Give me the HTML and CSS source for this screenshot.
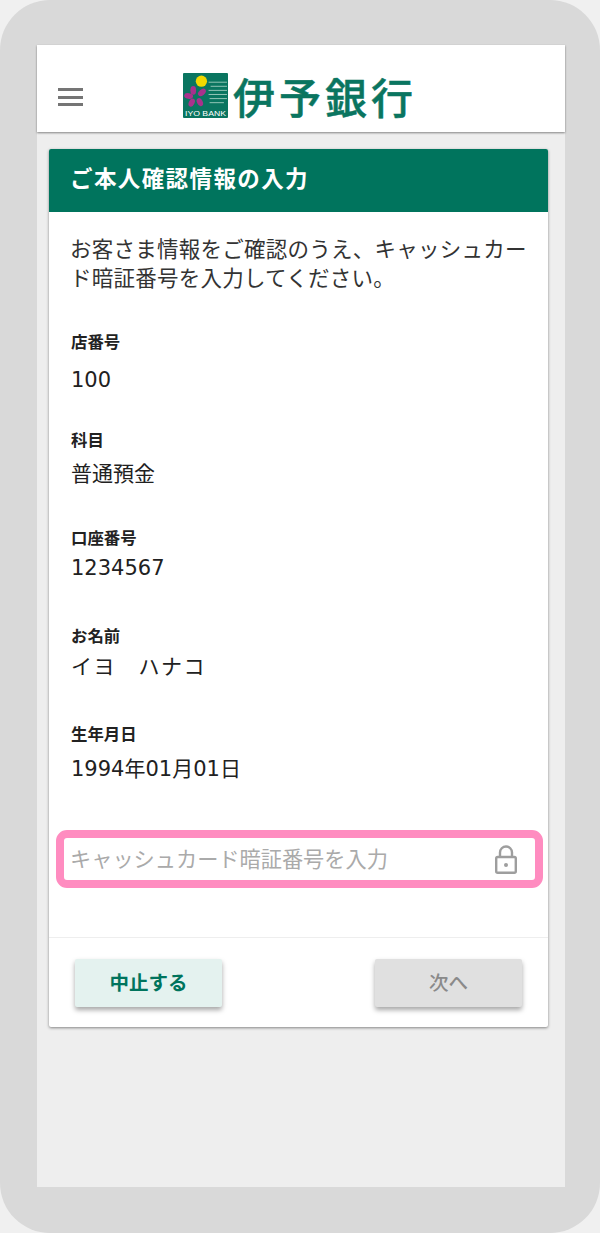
FILE: index.html
```html
<!DOCTYPE html>
<html lang="ja">
<head>
  <meta charset="UTF-8">
  <title>ご本人確認情報の入力</title>
  <link rel="stylesheet" href="styles.css">
</head>
<body>
  <div class="phone">
    <div class="screen">
      <header class="topbar">
        <button class="menu" aria-label="メニュー"><span></span><span></span><span></span></button>
        <div class="logo">
          <svg class="mark" viewBox="0 0 44 44" width="45" height="45">
            <rect width="44" height="44" rx="1" fill="#0a7560"/>
            <g stroke="#8fc3b4" stroke-width="1">
              <line x1="25" y1="9" x2="43" y2="9"/>
              <line x1="27" y1="13" x2="43" y2="13"/>
              <line x1="25" y1="17" x2="43" y2="17"/>
              <line x1="25" y1="21" x2="43" y2="21"/>
              <line x1="26" y1="25" x2="43" y2="25"/>
              <line x1="26" y1="29" x2="40" y2="29"/>
            </g>
            <circle cx="18" cy="8" r="5.5" fill="#f2d800"/>
            <g fill="#a8328c">
              <ellipse cx="10" cy="17" rx="2.8" ry="4.2"/>
              <ellipse cx="18.5" cy="19" rx="2.8" ry="4.4" transform="rotate(50 18.5 19)"/>
              <ellipse cx="5.5" cy="22.5" rx="4.4" ry="2.8" transform="rotate(10 5.5 22.5)"/>
              <ellipse cx="8.5" cy="29" rx="2.8" ry="4.2" transform="rotate(25 8.5 29)"/>
              <ellipse cx="16.5" cy="28.5" rx="2.8" ry="4.2" transform="rotate(-25 16.5 28.5)"/>
            </g>
            <text x="2" y="42" class="mark-text" textLength="40" lengthAdjust="spacingAndGlyphs">IYO BANK</text>
          </svg>
          <span class="logo-name">伊予銀行</span>
        </div>
      </header>

      <main class="card">
        <h1 class="card-title">ご本人確認情報の入力</h1>
        <div class="card-body">
          <p class="intro">お客さま情報をご確認のうえ、キャッシュカード暗証番号を入力してください。</p>

          <div class="field field-branch">
            <div class="label">店番号</div>
            <div class="value">100</div>
          </div>
          <div class="field field-type">
            <div class="label">科目</div>
            <div class="value">普通預金</div>
          </div>
          <div class="field field-account">
            <div class="label">口座番号</div>
            <div class="value">1234567</div>
          </div>
          <div class="field field-name">
            <div class="label">お名前</div>
            <div class="value">イヨ　ハナコ</div>
          </div>
          <div class="field field-birth">
            <div class="label">生年月日</div>
            <div class="value">1994年01月01日</div>
          </div>

          <div class="pin-box">
            <input class="pin-input" type="password" placeholder="キャッシュカード暗証番号を入力">
            <svg class="lock" viewBox="0 0 22 29" width="22" height="29">
              <path d="M5 12V7.5a6 6 0 0 1 12 0V12" fill="none" stroke="#9e9e9e" stroke-width="2.4"/>
              <rect x="1.2" y="12" width="19.6" height="15.8" rx="1.5" fill="none" stroke="#9e9e9e" stroke-width="2.4"/>
              <circle cx="11" cy="20" r="2" fill="#9e9e9e"/>
            </svg>
          </div>
        </div>
        <footer class="card-actions">
          <button class="btn btn-cancel">中止する</button>
          <button class="btn btn-next" disabled>次へ</button>
        </footer>
      </main>
    </div>
  </div>
</body>
</html>
```

FILE: styles.css
```css
* { box-sizing: border-box; }
body {
  margin: 0;
  background: #f0f0f0;
  font-family: "DejaVu Sans", "Noto Sans CJK JP", sans-serif;
  color: #212121;
}
.phone {
  width: 600px;
  height: 1233px;
  padding: 45px 35px 46px 37px;
  background: #d9d9d9;
  border-radius: 50px;
}
.screen {
  height: 100%;
  background: #eeeeee;
  display: flex;
  flex-direction: column;
  gap: 17px;
}
.topbar {
  height: 87px;
  background: #fff;
  box-shadow: 0 1px 2px rgba(0, 0, 0, 0.45);
  display: flex;
  align-items: flex-end;
}
.menu {
  width: 25px;
  height: 18px;
  margin: 0 0 26px 21px;
  padding: 0;
  border: none;
  background: none;
  display: flex;
  flex-direction: column;
  justify-content: space-between;
}
.menu span {
  display: block;
  height: 3px;
  background: #757575;
}
.logo {
  display: flex;
  align-items: center;
  gap: 5px;
  margin: 0 0 14px 100px;
}
.mark { display: block; }
.mark-text {
  font-family: "Liberation Sans", sans-serif;
  font-size: 7px;
  fill: #fff;
}
.logo-name {
  font-family: "Noto Sans CJK JP", sans-serif;
  font-size: 42px;
  font-weight: 500;
  letter-spacing: 4px;
  line-height: 44px;
  color: #0a7560;
  -webkit-text-stroke: 0.5px #0a7560;
  white-space: nowrap;
}
.card {
  margin: 0 17px 0 12px;
  height: 878px;
  background: #fff;
  border-radius: 2px;
  box-shadow: 0 1px 3px rgba(0, 0, 0, 0.45);
  display: flex;
  flex-direction: column;
}
.card-title {
  margin: 0;
  height: 63px;
  padding-left: 21px;
  background: #00745d;
  border-radius: 2px 2px 0 0;
  color: #fff;
  font-family: "Noto Sans CJK JP", sans-serif;
  font-size: 22.5px;
  font-weight: 700;
  letter-spacing: 1.4px;
  line-height: 57px;
}
.card-body {
  flex: 1;
  padding: 21px 5px 0 22px;
}
.intro {
  width: 465px;
  margin: 0 0 38px -1px;
  font-family: "Noto Sans CJK JP", sans-serif;
  font-size: 21.5px;
  letter-spacing: 0.25px;
  line-height: 29px;
  color: #333;
}
.label {
  font-family: "Noto Sans CJK JP", sans-serif;
  font-size: 16.4px;
  font-weight: 700;
  line-height: 24px;
  color: #222;
}
.value {
  font-size: 21px;
  line-height: 28px;
  color: #212121;
}
.field-branch { height: 98px; }
.field-branch .label { margin-bottom: 13px; }
.field-type { height: 98px; }
.field-type .label { margin-bottom: 9px; }
.field-account { height: 98px; }
.field-account .label { margin-bottom: 5px; }
.field-name { height: 98px; }
.field-name .label { margin-bottom: 6px; }
.field-name .value { letter-spacing: 1.5px; }
.field-birth { height: 109px; }
.field-birth .label { margin-bottom: 10px; }
.pin-box {
  width: 487px;
  height: 58px;
  margin-left: -15px;
  border: 8px solid #ff8cc0;
  border-radius: 11px;
  display: flex;
  align-items: center;
  padding-right: 18px;
}
.pin-input {
  flex: 1;
  min-width: 0;
  height: 100%;
  border: none;
  outline: none;
  padding: 0 0 4px 6px;
  background: none;
  font-family: "Noto Sans CJK JP", sans-serif;
  font-size: 21.2px;
}
.pin-input::placeholder {
  color: #aaa;
  opacity: 1;
}
.card-actions {
  height: 90px;
  border-top: 1px solid #eee;
  padding: 21px 26px 0;
  display: flex;
  justify-content: space-between;
  align-items: flex-start;
}
.btn {
  width: 147px;
  height: 48px;
  padding: 0 0 4px;
  border: none;
  border-radius: 2px;
  box-shadow: 0 3px 5px rgba(0, 0, 0, 0.35);
  font-family: "Noto Sans CJK JP", sans-serif;
  font-size: 19.5px;
  font-weight: 700;
}
.btn-cancel {
  background: #e4f2ef;
  color: #00745d;
}
.btn-next {
  background: #e0e0e0;
  color: #8a8a8a;
  font-weight: 500;
}
```
